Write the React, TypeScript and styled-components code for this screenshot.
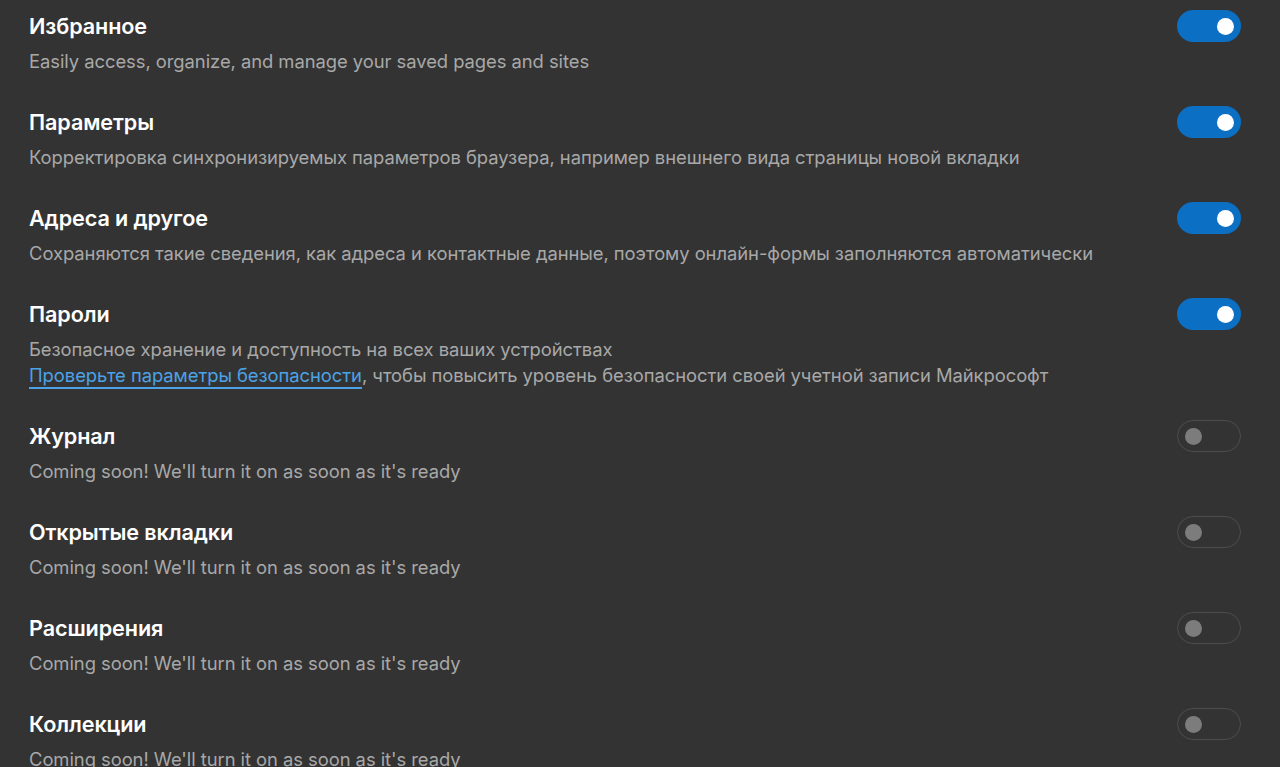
import React from 'react';
import styled, { createGlobalStyle } from 'styled-components';

const GlobalStyle = createGlobalStyle`
  html, body {
    margin: 0;
    padding: 0;
    background: #333333;
  }
  body {
    font-family: Inter, "Noto Sans", "Liberation Sans", sans-serif;
    -webkit-font-smoothing: antialiased;
  }
`;

const Page = styled.main`
  min-height: 767px;
  background: #333333;
  padding: 10px 39px 0 29px;
  box-sizing: border-box;
  overflow: hidden;
`;

const List = styled.ul`
  list-style: none;
  margin: 0;
  padding: 0;
  display: flex;
  flex-direction: column;
  gap: 32px;
`;

const Row = styled.li`
  display: flex;
  flex-direction: column;
`;

const Header = styled.div`
  display: flex;
  align-items: center;
  justify-content: space-between;
  height: 32px;
`;

const Title = styled.h3`
  margin: 0;
  font-size: 21.6px;
  line-height: 30px;
  font-weight: 600;
  color: #ffffff;
  letter-spacing: -0.1px;
`;

const Description = styled.p`
  margin: 6px 0 0;
  font-size: 18.4px;
  line-height: 26px;
  color: #a8a8a8;
  letter-spacing: -0.05px;
`;

const Link = styled.a`
  color: #4ba2e6;
  text-decoration: underline;
  text-decoration-thickness: 2px;
  text-underline-offset: 5px;
  cursor: pointer;
`;

const Switch = styled.button<{ $on: boolean }>`
  position: relative;
  flex: none;
  width: 64px;
  height: 32px;
  padding: 0;
  border-radius: 16px;
  border: ${(p) => (p.$on ? 'none' : '1.5px solid #4d4d4d')};
  background: ${(p) => (p.$on ? '#0b6fc4' : 'transparent')};
  box-sizing: border-box;
  cursor: pointer;

  &::after {
    content: '';
    position: absolute;
    top: 50%;
    width: 17px;
    height: 17px;
    margin-top: -8.5px;
    border-radius: 50%;
    background: ${(p) => (p.$on ? '#ffffff' : '#7c7c7c')};
    ${(p) => (p.$on ? 'right: 7px;' : 'left: 7px;')}
  }
`;

type Item = {
  title: string;
  on: boolean;
  desc: React.ReactNode;
};

const soon = "Coming soon! We'll turn it on as soon as it's ready";

const items: Item[] = [
  { title: 'Избранное', on: true, desc: 'Easily access, organize, and manage your saved pages and sites' },
  {
    title: 'Параметры',
    on: true,
    desc: 'Корректировка синхронизируемых параметров браузера, например внешнего вида страницы новой вкладки',
  },
  {
    title: 'Адреса и другое',
    on: true,
    desc: 'Сохраняются такие сведения, как адреса и контактные данные, поэтому онлайн-формы заполняются автоматически',
  },
  {
    title: 'Пароли',
    on: true,
    desc: (
      <>
        Безопасное хранение и доступность на всех ваших устройствах
        <br />
        <Link>Проверьте параметры безопасности</Link>, чтобы повысить уровень безопасности своей учетной записи
        Майкрософт
      </>
    ),
  },
  { title: 'Журнал', on: false, desc: soon },
  { title: 'Открытые вкладки', on: false, desc: soon },
  { title: 'Расширения', on: false, desc: soon },
  { title: 'Коллекции', on: false, desc: soon },
];

const App = () => {
  return (
    <>
      <GlobalStyle />
      <Page>
        <List>
          {items.map((item) => (
            <Row key={item.title}>
              <Header>
                <Title>{item.title}</Title>
                <Switch $on={item.on} aria-pressed={item.on} aria-label={item.title} />
              </Header>
              <Description>{item.desc}</Description>
            </Row>
          ))}
        </List>
      </Page>
    </>
  );
};

export default App;
